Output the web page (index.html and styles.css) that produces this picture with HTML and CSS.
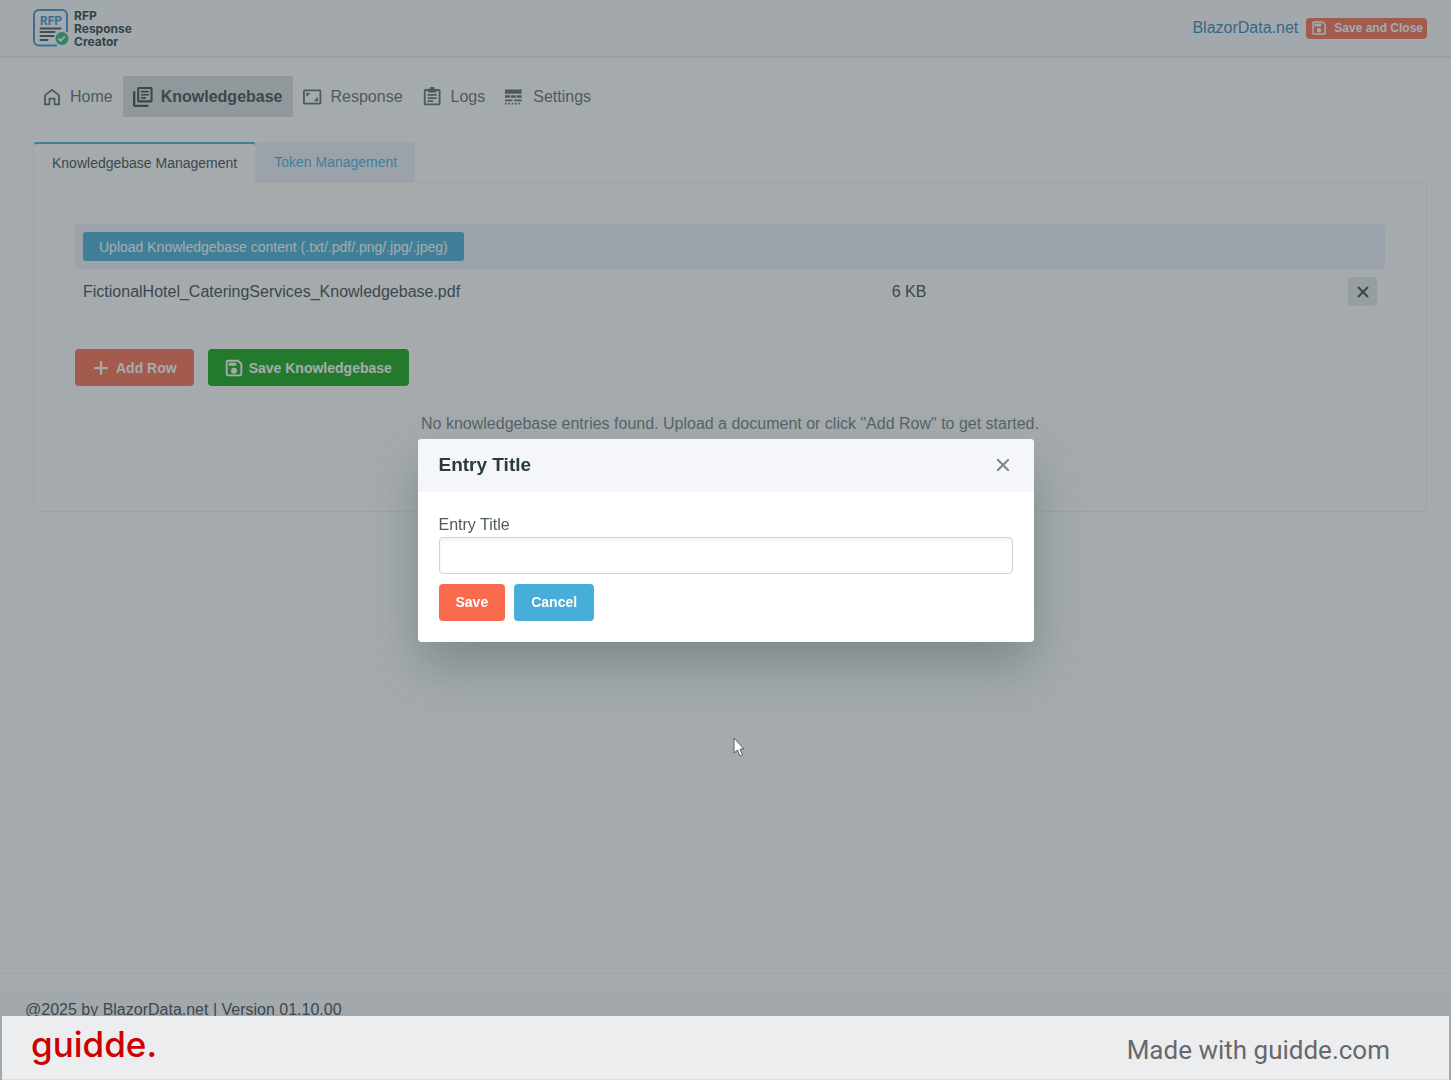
FILE: index.html
```html
<!DOCTYPE html>
<html lang="en">
<head>
    <meta charset="UTF-8">
    <meta name="viewport" content="width=device-width, initial-scale=1.0">
    <title>RFP Response Creator</title>
    <link rel="stylesheet" href="styles.css">
</head>
<body>
    <header class="header">
        <a class="logo" href="#">
            <svg width="36" height="38" viewBox="0 0 36 38" fill="none">
                <path d="M24 36.500H6a5 5 0 0 1-5-5V6a5 5 0 0 1 5-5h23a5 5 0 0 1 5 5v17" stroke="#3f8fc4" stroke-width="2"/>
                <text x="7" y="16" class="logo-tag">RFP</text>
                <path d="M7.500 19.500h20M7.500 23h14M7.500 27h13M7.500 31h7" stroke="#44545c" stroke-width="2" stroke-linecap="round"/>
                <circle cx="29" cy="29.500" r="6.500" fill="#2fb880"/>
                <path d="M25.500 29.500l2.300 2.300 4-4.300" stroke="#fff" stroke-width="1.800"/>
            </svg>
            <span class="logo-text">RFP<br>Response<br>Creator</span>
        </a>
        <div class="header-actions">
            <a class="site-link" href="#">BlazorData.net</a>
            <button class="btn btn-primary btn-small" type="button">
                <svg class="icon" viewBox="0 0 24 24"><path d="M17 3H5a2 2 0 0 0-2 2v14a2 2 0 0 0 2 2h14a2 2 0 0 0 2-2V7l-4-4zm2 16H5V5h11.200L19 7.800V19zM12 12a3 3 0 1 0 0 6 3 3 0 0 0 0-6zM6 6h9v4H6z"/></svg>
                Save and Close
            </button>
        </div>
    </header>

    <nav class="nav">
        <a class="nav-item" href="#">
            <svg class="icon" viewBox="0 0 24 24"><path d="M12 2L2.500 9.500V22H10v-7h4v7h7.500V9.500L12 2zm0 2.800l7.300 5.800v9.200h-3.200v-7H7.900v7H4.700v-9.200z"/></svg>
            Home
        </a>
        <a class="nav-item active" href="#">
            <svg class="icon" viewBox="0 0 24 24"><path d="M2.800 5H0v17a2 2 0 0 0 2 2h16.500v-2.700H2.800zM21.500 0H7a2 2 0 0 0-2 2v14.500a2 2 0 0 0 2 2h14.500a2 2 0 0 0 2-2V2a2 2 0 0 0-2-2zm-.5 16H7.500V2.500H21zM9.500 4.500h9.500v2H9.500zm0 3.800h9.500v2H9.500zm0 3.800h6v2h-6z"/></svg>
            Knowledgebase
        </a>
        <a class="nav-item" href="#">
            <svg class="icon" viewBox="0 0 24 24"><path d="M20 3H2a2 2 0 0 0-2 2v14a2 2 0 0 0 2 2h18a2 2 0 0 0 2-2V5a2 2 0 0 0-2-2zm-.2 15.800H2.200V5.200h17.600zM4 11h2V9h2V7H4zm14 2h-2v2h-2v2h4z"/></svg>
            Response
        </a>
        <a class="nav-item" href="#">
            <svg class="icon" viewBox="0 0 24 24"><path fill-rule="evenodd" d="M14 2.500a3 3 0 0 0-6 0H3a2 2 0 0 0-2 2V20a2 2 0 0 0 2 2h16a2 2 0 0 0 2-2V4.500a2 2 0 0 0-2-2zM3.200 4.700H6V6.500h10V4.700h2.800v15.100H3.200zM5.500 8.500h11v2h-11zm0 3.800h11v2h-11zm0 3.700h7v2h-7z"/></svg>
            Logs
        </a>
        <a class="nav-item" href="#">
            <svg class="icon" viewBox="0 0 24 24"><path d="M0 3h20v5H0zM0 10h6v3H0zm7 0h6v3H7zm7 0h6v3h-6zM0 15h9v2H0zm11 0h9v2h-9zM0 19h2v2H0zm4 0h2v2H4zm4 0h2v2H8zm4 0h2v2h-2zm4 0h2v2h-2z"/></svg>
            Settings
        </a>
    </nav>

    <main class="main">
        <div class="tabs" role="tablist">
            <button class="tab selected" type="button" role="tab" aria-selected="true">Knowledgebase Management</button>
            <button class="tab" type="button" role="tab">Token Management</button>
        </div>
        <section class="panel">
            <div class="upload-bar">
                <button class="upload-btn" type="button">Upload Knowledgebase content (.txt/.pdf/.png/.jpg/.jpeg)</button>
            </div>
            <div class="file-row">
                <span>FictionalHotel_CateringServices_Knowledgebase.pdf</span>
                <div class="file-info">
                    <span>6 KB</span>
                    <button class="remove-btn" type="button" aria-label="Remove file">
                        <svg width="12" height="12" viewBox="0 0 12 12"><path d="M1 1l10 10M11 1L1 11"/></svg>
                    </button>
                </div>
            </div>
            <div class="actions">
                <button class="btn btn-primary" type="button">
                    <svg class="icon" viewBox="0 0 24 24"><path d="M13.500 3h-3v7.500H3v3h7.500V21h3v-7.500H21v-3h-7.500z"/></svg>
                    Add Row
                </button>
                <button class="btn btn-success" type="button">
                    <svg class="icon" viewBox="0 0 24 24"><path d="M18 1H4a3 3 0 0 0-3 3v16a3 3 0 0 0 3 3h16a3 3 0 0 0 3-3V6l-5-5zm2.500 19.500h-17v-17h13.500L20.500 7zM12 11.500a4 4 0 1 0 0 8 4 4 0 0 0 0-8zM5 5h10v4H5z"/></svg>
                    Save Knowledgebase
                </button>
            </div>
            <p class="empty">No knowledgebase entries found. Upload a document or click "Add Row" to get started.</p>
        </section>
    </main>

    <footer class="footer">
        <div class="footer-text">@2025 by BlazorData.net | Version 01.10.00</div>
    </footer>

    <div class="mask">
        <div class="dialog" role="dialog" aria-labelledby="dialog-title">
            <div class="dialog-header">
                <h2 class="dialog-title" id="dialog-title">Entry Title</h2>
                <button class="dialog-close" type="button" aria-label="Close">
                    <svg width="12" height="12" viewBox="0 0 12 12"><path d="M0 0l12 12M12 0L0 12"/></svg>
                </button>
            </div>
            <form class="dialog-body">
                <label for="entry-title">Entry Title</label>
                <input class="text-box" type="text" id="entry-title">
                <div class="dialog-actions">
                    <button class="btn btn-primary" type="button">Save</button>
                    <button class="btn btn-info" type="button">Cancel</button>
                </div>
            </form>
        </div>
    </div>

    <div class="banner">
        <span class="banner-logo">guidde.</span>
        <span class="banner-text">Made with guidde.com</span>
    </div>

    <svg class="cursor" width="13" height="21" viewBox="0 0 13 21">
        <path d="M1 1v15l3.500-3 2.500 6 2.500-1-2.500-6h4z" fill="#fff" stroke="#55597a" stroke-width="1"/>
    </svg>
</body>
</html>
```

FILE: styles.css
```css
* {
    margin: 0;
    padding: 0;
    box-sizing: border-box;
}

body {
    min-height: 100vh;
    display: flex;
    flex-direction: column;
    font-family: "Liberation Sans", Arial, sans-serif;
    font-size: 16px;
    line-height: 24px;
    color: #3a474d;
    background-color: #fff;
}

a {
    color: inherit;
    text-decoration: none;
}

button, input {
    font-family: inherit;
    border: none;
}

button {
    cursor: pointer;
}

.icon {
    width: 18px;
    height: 18px;
    fill: currentColor;
    flex: none;
}

/* Header */
.header {
    height: 58px;
    padding: 0 24px 0 33px;
    display: flex;
    align-items: center;
    justify-content: space-between;
    background-color: #fafafc;
    border-bottom: 2px solid #ebedf0;
}

.logo {
    display: flex;
    align-items: center;
    gap: 5px;
}

.logo-tag {
    font: bold 12px Roboto, sans-serif;
    fill: #3f8fc4;
}

.logo-text {
    font: 700 12px/13px Inter, sans-serif;
    color: #2b3d45;
}

.header-actions {
    display: flex;
    align-items: center;
    gap: 8px;
}

.site-link {
    color: #2e86b8;
}

/* Buttons */
.btn {
    height: 37px;
    padding: 0 17px;
    display: flex;
    align-items: center;
    justify-content: center;
    gap: 6px;
    border-radius: 4px;
    color: #fff;
    font-size: 14px;
    font-weight: bold;
}

.btn-primary {
    background-color: #f96b4c;
}

.btn-info {
    background-color: #47aed9;
}

.btn-success {
    background-color: #12a511;
}

.btn-small {
    height: 21px;
    padding: 0 4px;
    font-size: 12px;
}

/* Navigation */
.nav {
    display: flex;
    padding: 18px 32px 0;
}

.nav-item {
    height: 41px;
    padding: 0 10px;
    display: flex;
    align-items: center;
    gap: 8px;
    color: #5c6970;
}

.nav-item .icon {
    width: 20px;
    height: 20px;
}

.nav-item.active {
    background-color: #dadcdf;
    color: #3a474d;
    font-weight: bold;
}

/* Tabs */
.main {
    flex: 1;
    padding: 25px 24px 0 33px;
    isolation: isolate;
}

.tabs {
    display: flex;
}

.tab {
    height: 40px;
    padding: 0 18px;
    font-size: 14px;
    color: #47aed9;
    background-color: #edeffa;
    border-radius: 4px 4px 0 0;
}

.tab.selected {
    height: 41px;
    margin-bottom: -1px;
    padding-bottom: 2px;
    color: #3a474d;
    background-color: #fff;
    border: 1px solid #f2f3fa;
    border-top: 2px solid #47aed9;
    border-bottom: none;
    z-index: 1;
}

.panel {
    padding: 41px 41px 75px;
    border: 1px solid #f0f1f9;
    border-radius: 0 0 4px 4px;
}

.upload-bar {
    padding: 8px;
    display: flex;
    background-color: #edeffa;
    border-radius: 4px;
}

.upload-btn {
    height: 29px;
    padding: 0 16px;
    border-radius: 3px;
    background-color: #47aed9;
    color: #fff;
    font-size: 14px;
}

.file-row {
    padding: 8px;
    display: grid;
    grid-template-columns: 5fr 3fr;
    align-items: center;
}

.file-info {
    display: flex;
    align-items: center;
    justify-content: space-between;
}

.remove-btn {
    width: 29px;
    height: 29px;
    display: grid;
    place-items: center;
    border-radius: 3px;
    background-color: #e4e7e9;
}

.remove-btn svg,
.dialog-close svg {
    stroke: #3a474d;
    stroke-width: 2;
}

.actions {
    display: flex;
    gap: 14px;
    margin-top: 35px;
}

.empty {
    margin-top: 26px;
    text-align: center;
    color: #6f7a80;
}

/* Footer */
.footer {
    height: 107px;
    padding-top: 17px;
    border-top: 1px solid #eff1f2;
}

.footer-text {
    height: 100%;
    padding: 7px 25px;
    background-color: #fafafc;
}

/* Dialog */
.mask {
    position: fixed;
    inset: 0;
    display: grid;
    place-items: center;
    background-color: rgba(58, 71, 77, 0.46);
}

.dialog {
    width: 616px;
    max-width: 100%;
    overflow: hidden;
    border-radius: 4px;
    background-color: #fff;
    box-shadow: 0 24px 50px rgba(58, 71, 77, 0.35);
}

.dialog-header {
    height: 53px;
    padding: 0 25px 0 21px;
    display: flex;
    align-items: center;
    justify-content: space-between;
    background-color: #f4f6fa;
}

.dialog-title {
    font-size: 19px;
    color: #2b3a40;
}

.dialog-close {
    display: flex;
    background: none;
}

.dialog-close svg {
    stroke: #7b868c;
}

.dialog-body {
    padding: 21px;
}

.dialog-body label {
    display: block;
    color: #4f5a60;
}

.text-box {
    display: block;
    width: 100%;
    height: 37px;
    padding: 0 12px;
    border: 1px solid #cdd3d6;
    border-radius: 4px;
    font-size: 16px;
    box-shadow: inset 0 3px 4px rgba(58, 71, 77, 0.06);
}

.dialog-actions {
    margin-top: 10px;
    display: flex;
    gap: 9px;
}

/* Banner over the bottom of the page */
.banner {
    position: fixed;
    left: 2px;
    right: 2px;
    bottom: 0;
    height: 64px;
    padding: 0 59px 0 29px;
    display: flex;
    align-items: center;
    justify-content: space-between;
    background-color: #ecedef;
    border-bottom: 1px solid #dcdddf;
}

.banner-logo {
    font: 500 35px/56px Inter, sans-serif;
    color: #cb0000;
    padding-bottom: 8px;
}

.banner-text {
    font: 26px/32px Roboto, sans-serif;
    color: #66686a;
    padding-top: 4px;
}

.cursor {
    position: absolute;
    left: 733px;
    top: 737px;
}
```
